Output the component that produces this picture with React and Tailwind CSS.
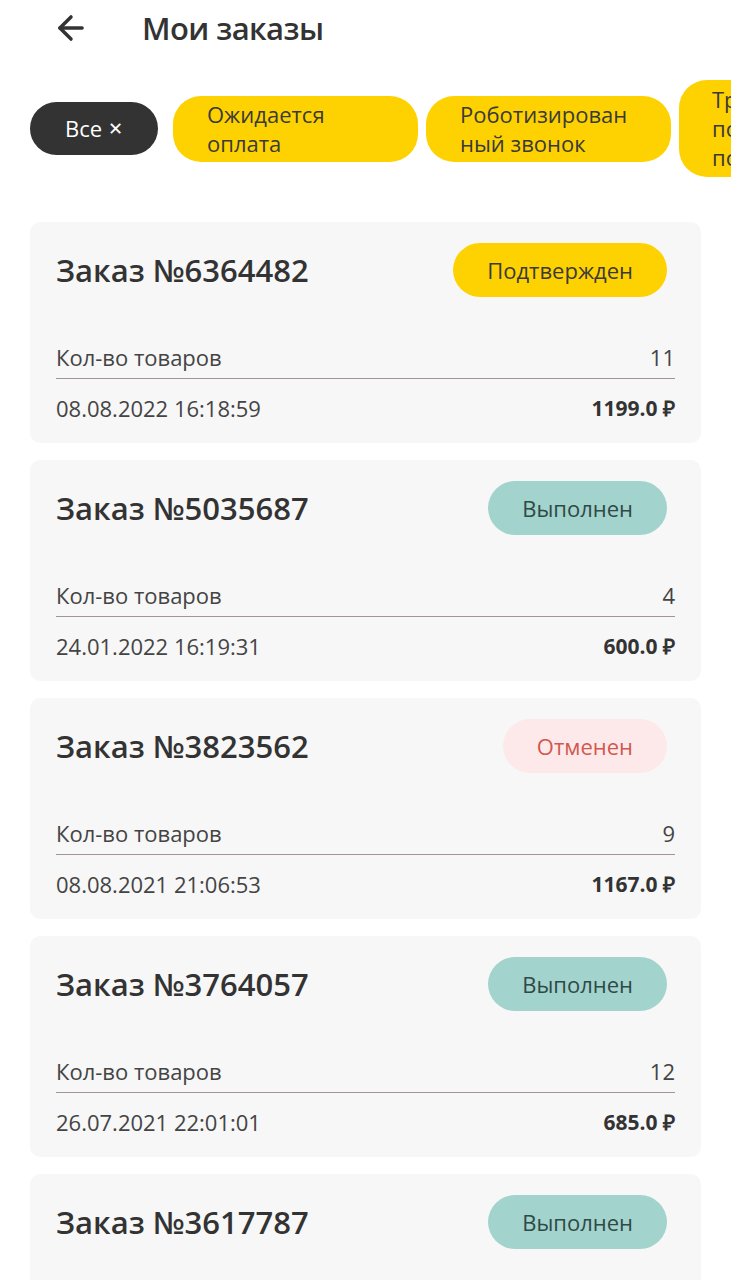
import { ArrowLeft } from "lucide-react";

const orders = [
    { id: "6364482", status: "confirmed", count: 11, date: "08.08.2022 16:18:59", total: "1199.0" },
    { id: "5035687", status: "done", count: 4, date: "24.01.2022 16:19:31", total: "600.0" },
    { id: "3823562", status: "cancelled", count: 9, date: "08.08.2021 21:06:53", total: "1167.0" },
    { id: "3764057", status: "done", count: 12, date: "26.07.2021 22:01:01", total: "685.0" },
    { id: "3617787", status: "done", count: 3, date: "20.07.2021 12:10:44", total: "420.0" },
];

const statuses = {
    confirmed: { label: "Подтвержден", className: "bg-[#fed200] text-[#3a3a3a]" },
    done: { label: "Выполнен", className: "bg-[#a2d3cc] text-[#2f4a47]" },
    cancelled: { label: "Отменен", className: "bg-[#fde9e9] text-[#d2584f]" },
};

function OrderCard({ order }) {
    const status = statuses[order.status];
    return (
        <div className="bg-[#f7f7f7] rounded-[10px] h-[221px] shrink-0 px-[26px] pt-[21px]">
            <div className="flex items-center justify-between h-[54px]">
                <h2 className="text-[31px] font-semibold text-[#333]">
                    Заказ №{order.id}
                </h2>
                <span
                    className={
                        "h-[54px] px-[34px] mr-[8px] rounded-full flex items-center justify-center text-[22px] " +
                        status.className
                    }
                >
                    {status.label}
                </span>
            </div>
            <div className="mt-[45px] flex justify-between text-[22px] text-[#444] leading-[30px] pb-[6px] border-b border-[#a69393]">
                <span>Кол-во товаров</span>
                <span>{order.count}</span>
            </div>
            <div className="mt-[14px] flex justify-between items-center text-[22px] leading-[30px]">
                <span className="text-[#444]">{order.date}</span>
                <span className="font-bold text-[#333] text-[21px]">{order.total} ₽</span>
            </div>
        </div>
    );
}

export default function App() {
    return (
        <div className="w-[731px] h-[1280px] overflow-hidden bg-white font-['Open_Sans',sans-serif]">
            <div className="flex items-center h-[56px] pl-[52px]">
                <ArrowLeft size={38} strokeWidth={2.2} className="text-[#333]" />
                <h1 className="ml-[52px] text-[31px] font-semibold text-[#333] tracking-[-0.6px]">
                    Мои заказы
                </h1>
            </div>

            <div className="flex items-center gap-[8px] pl-[30px] mt-[24px] h-[97px] overflow-hidden">
                <button className="shrink-0 h-[53px] w-[128px] rounded-full bg-[#333] text-white text-[22px] flex items-center justify-center gap-[6px]">
                    Все <span className="text-[18px]">✕</span>
                </button>
                <button className="shrink-0 h-[66px] w-[245px] ml-[7px] rounded-[28px] bg-[#fed200] text-[#3a3a3a] text-[22px] leading-[29px] text-left pl-[34px]">
                    Ожидается
                    <br />
                    оплата
                </button>
                <button className="shrink-0 h-[66px] w-[245px] rounded-[28px] bg-[#fed200] text-[#3a3a3a] text-[22px] leading-[29px] text-left pl-[34px] whitespace-nowrap">
                    Роботизирован
                    <br />
                    ный звонок
                </button>
                <button className="shrink-0 h-[97px] w-[245px] rounded-[28px] bg-[#fed200] text-[#3a3a3a] text-[22px] leading-[29px] text-left pl-[33px]">
                    Требуется
                    <br />
                    подтверждение
                    <br />
                    покупателем
                </button>
            </div>

            <div className="px-[30px] mt-[45px] flex flex-col gap-[17px]">
                {orders.map((order) => (
                    <OrderCard key={order.id} order={order} />
                ))}
            </div>
        </div>
    );
}
